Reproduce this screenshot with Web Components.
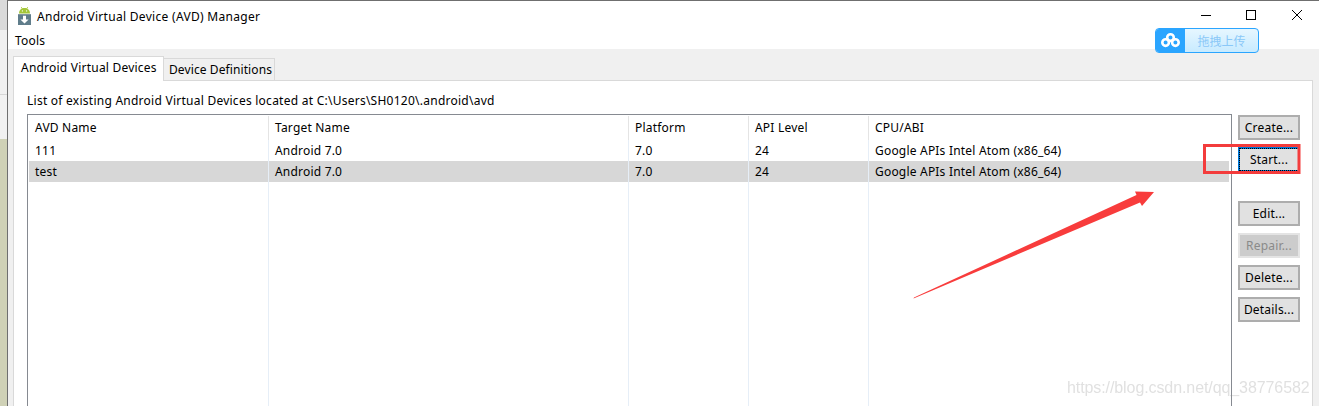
<!DOCTYPE html>
<html><head><meta charset="utf-8"><style>
html,body{margin:0;padding:0;height:406px;overflow:hidden;background:#f0f0f0}
body{font:12px "Noto Sans","Noto Sans CJK SC",sans-serif;color:#000;display:flex;position:relative}
</style></head><body>
<desk-strip></desk-strip>
<avd-window title-text="Android Virtual Device (AVD) Manager">
  <avd-tabs>
    <avd-panel caption="List of existing Android Virtual Devices located at C:\Users\SH0120\.android\avd">
      <avd-table slot="table"></avd-table>
      <avd-actions slot="actions"></avd-actions>
    </avd-panel>
  </avd-tabs>
</avd-window>
<upload-badge></upload-badge>
<red-annotation></red-annotation>
<script>
function def(name,html,init){customElements.define(name,class extends HTMLElement{constructor(){super();this.attachShadow({mode:'open'}).innerHTML=typeof html==='function'?html(this):html}connectedCallback(){if(init)init(this)}})}

def('desk-strip',`<style>:host{display:flex;flex-direction:column;width:7px;flex:none;height:406px}
.a{height:30px;background:#dadada}.b{height:64px;background:#f0f0f0;border-bottom:1px solid #d6d6d6}.c{height:44px;background:#f1f1f1}
.d{flex:1;background:#cfd1b6}</style><div class="a"></div><div class="b"></div><div class="c"></div><div class="d"></div>`);

def('avd-window',`<style>:host{display:flex;flex-direction:column;flex:1;min-width:0;height:406px;box-sizing:border-box;border-left:1px solid #6f6f6f;border-top:1px solid #6f6f6f;background:#f0f0f0}
.title{height:29px;background:#fff;display:flex;align-items:center;flex:none}
.icon{margin-left:10px;width:13px;height:18px;flex:none;display:block}
.t{margin-left:6px;margin-top:2px;letter-spacing:.3px;white-space:nowrap;color:#000}
.ctl{margin-left:auto;width:118px;height:29px;display:block;flex:none}
.menu{height:19px;background:#fff;flex:none;padding-left:7px;line-height:21px;letter-spacing:.2px}
.body{flex:1;min-height:0;padding:7px 6px 0 5px}
</style>
<div class="title">
<svg class="icon" viewBox="0 0 13 18"><path fill="#a4c639" d="M1 6.4C1 3 3.4 1 6.5 1S12 3 12 6.4z"/><path stroke="#a4c639" stroke-width=".8" d="M3.2 0l1 1.6M9.8 0l-1 1.6"/><circle cx="4.4" cy="3.9" r=".6" fill="#fff"/><circle cx="8.6" cy="3.9" r=".6" fill="#fff"/><rect x="0" y="7.2" width="13" height="10.8" fill="#607d8b"/><path fill="#fff" d="M5 8.8h3v3.6h2.6L6.5 16.4 2.4 12.4H5z"/></svg>
<span class="t"></span>
<svg class="ctl" viewBox="0 0 118 29"><g fill="none" stroke="#000"><path d="M0 14.5h10"/><rect x="45.5" y="9.5" width="9" height="9"/><path d="M91 9l10 10M101 9L91 19"/></g></svg>
</div>
<div class="menu">Tools</div>
<div class="body"><slot></slot></div>`,el=>{el.shadowRoot.querySelector('.t').textContent=el.getAttribute('title-text')});

def('avd-tabs',`<style>:host{display:flex;flex-direction:column;height:100%}
.strip{display:flex;align-items:flex-end;height:25px;flex:none;position:relative;z-index:1;margin-bottom:-1px}
.tab{box-sizing:border-box;border:1px solid #d9d9d9;white-space:nowrap}
.on{width:151px;height:25px;background:#fff;border-bottom:0;padding:2px 0 0 7px;letter-spacing:.22px}
.off{width:111px;height:23px;background:#f0f0f0;border-left:0;padding:2px 0 0 5px;letter-spacing:.1px}
.content{flex:1;min-height:0}</style>
<div class="strip"><div class="tab on">Android Virtual Devices</div><div class="tab off">Device Definitions</div></div>
<div class="content"><slot></slot></div>`);

def('avd-panel',`<style>:host{display:flex;flex-direction:column;box-sizing:border-box;height:100%;background:#fff;border:1px solid #d9d9d9;border-bottom:0;padding:11px 0 0 13px}
.cap{height:22px;flex:none;white-space:nowrap;line-height:18px;letter-spacing:.25px}
.row{display:flex;flex:1;min-height:0}
</style><div class="cap"></div><div class="row"><slot name="table"></slot><slot name="actions"></slot></div>`,el=>{el.shadowRoot.querySelector('.cap').textContent=el.getAttribute('caption')});

const cols=[['AVD Name',240,'111','test'],['Target Name',360,'Android 7.0','Android 7.0'],['Platform',120,'7.0','7.0'],['API Level',120,'24','24'],['CPU/ABI',360,'Google APIs Intel Atom (x86_64)','Google APIs Intel Atom (x86_64)']];
def('avd-table',`<style>:host{display:flex;box-sizing:border-box;width:1205px;height:100%;flex:none;border:1px solid #868a91;border-bottom:0;padding:0 2px 0 1px;letter-spacing:.2px}
.col{box-sizing:border-box;display:flex;flex-direction:column;flex:none;position:relative}
.col:not(:last-child)::after{content:"";position:absolute;right:0;top:25px;bottom:0;width:1px;background:#e6eef7}
.col:not(:last-child)::before{content:"";position:absolute;right:0;top:1px;height:24px;width:1px;background:#e4e4e4}
.h,.c{box-sizing:border-box;padding-left:6px;white-space:nowrap}
.h{height:25px;line-height:25px}
.c{height:21px;line-height:21px}
.s{background:#d7d7d7}
</style>`+cols.map((c,i)=>`<div class="col" style="width:${c[1]}px${i==4?';flex:1':''}"><div class="h">${c[0]}</div><div class="c">${c[2]}</div><div class="c s">${c[3]}</div></div>`).join(''));

def('avd-button',`<style>:host{display:block;box-sizing:border-box;width:62px;height:25px;border:2px solid #adadad;background:#e1e1e1;text-align:center;line-height:21px;white-space:nowrap;letter-spacing:.2px}
:host([disabled]){background:#cccccc;color:#8a8a8a;border-color:#e4e4e4}
:host([focused]){border-color:#0078d7;outline:1px dotted #000;outline-offset:-2px}
</style><slot></slot>`);

def('avd-actions',`<style>:host{display:flex;flex-direction:column;gap:7px;margin-left:6px;padding-top:1px}
.sp{margin-top:22px}</style>
<avd-button>Create...</avd-button>
<avd-button focused>Start...</avd-button>
<avd-button class="sp">Edit...</avd-button>
<avd-button disabled>Repair...</avd-button>
<avd-button>Delete...</avd-button>
<avd-button>Details...</avd-button>`);

def('upload-badge',`<style>:host{position:absolute;left:1155px;top:28px;width:104px;height:25px;box-sizing:border-box;border:1px solid #2aa5ff;border-radius:4px;display:flex;overflow:hidden;background:linear-gradient(#e6f6ff,#c8ebff)}
.l{width:29px;background:#2aa5ff;display:flex;align-items:center;justify-content:center;flex:none}
.r{flex:1;text-align:center;color:#8ac8f8;font:12px/23px "Noto Sans CJK SC",sans-serif}
</style><div class="l"><svg width="19" height="15" viewBox="0 0 19 15"><g fill="none" stroke="#fff" stroke-width="2.6"><circle cx="9.5" cy="4.6" r="3.3"/><circle cx="4.6" cy="9.6" r="3.3"/><circle cx="14.4" cy="9.6" r="3.3"/></g></svg></div><div class="r">拖拽上传</div>`);

def('red-annotation',`<style>:host{position:absolute;inset:0;pointer-events:none;display:block}
svg{position:absolute;left:0;top:0}
.w{position:absolute;left:1067px;top:378px;font:16px/20px "Liberation Sans",sans-serif;letter-spacing:-.09px;color:rgba(140,140,140,.27);white-space:nowrap;filter:blur(.4px)}
</style>
<svg width="1319" height="406"><rect x="1204.5" y="145.5" width="94.5" height="27" fill="none" stroke="#f33c3c" stroke-width="3"/>
<polygon fill="#f83c3c" points="913.5,298.5 914,297.5 1136.5,195 1135,191.5 1154,192 1142,206 1140,202.5"/></svg>
<div class="w">https://blog.csdn.net/qq_38776582</div>`);
</script>
</body></html>
